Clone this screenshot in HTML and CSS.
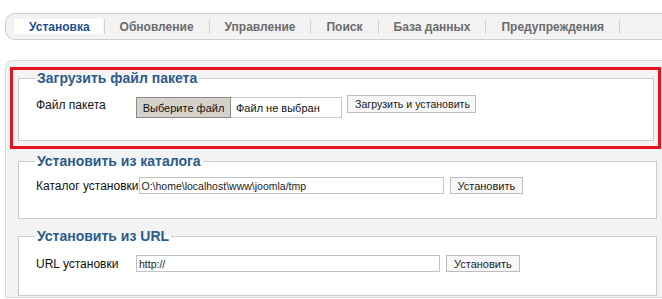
FILE: index.html
```html
<!DOCTYPE html>
<html lang="ru">
<head>
<meta charset="utf-8">
<link rel="stylesheet" href="styles.css">
</head>
<body>
<div class="tabs">
  <div class="tab active"><span>Установка</span></div>
  <div class="tab">Обновление</div>
  <div class="tab">Управление</div>
  <div class="tab">Поиск</div>
  <div class="tab">База данных</div>
  <div class="tab">Предупреждения</div>
</div>
<div class="panel">
  <div class="highlight">
    <fieldset class="box box1">
      <legend>Загрузить файл пакета</legend>
      <div class="row">
        <label class="lbl">Файл пакета</label>
        <div class="file">
          <span class="file-btn">Выберите файл</span>
          <span class="file-name">Файл не выбран</span>
        </div>
        <span class="btn btn-upload">Загрузить и установить</span>
      </div>
    </fieldset>
  </div>
  <fieldset class="box box2">
    <legend>Установить из каталога</legend>
    <div class="row">
      <label class="lbl">Каталог установки</label>
      <span class="input in2">O:\home\localhost\www\joomla/tmp</span>
      <span class="btn">Установить</span>
    </div>
  </fieldset>
  <fieldset class="box box3">
    <legend>Установить из URL</legend>
    <div class="row">
      <label class="lbl">URL установки</label>
      <span class="input in3">http://</span>
      <span class="btn">Установить</span>
    </div>
  </fieldset>
</div>
</body>
</html>
```
FILE: styles.css
```css
html, body {
  margin: 0;
  padding: 0;
  background: #ffffff;
  font-family: "Liberation Sans", Arial, sans-serif;
  overflow: hidden;
}
body {
  width: 662px;
  height: 299px;
}
.tabs {
  margin: 13px -10px 0 5px;
  height: 25px;
  border: 1px solid #cfcfcf;
  border-right: none;
  border-radius: 10px 0 0 10px;
  background: #f3f3f3;
  display: flex;
  align-items: center;
  padding-left: 8px;
}
.tab {
  font-size: 12px;
  font-weight: bold;
  color: #6b6b6b;
  padding: 0 15px;
  border-right: 1px solid #d0d0d0;
  line-height: 14px;
}
.tab.active {
  padding: 0 1px 0 0;
}
.tab.active span {
  display: block;
  background: #ffffff;
  color: #1b4f8e;
  padding: 1px 13px 0 15px;
  line-height: 14px;
}
.panel {
  margin: 20px -4px 0 5px;
  background: #f3f3f3;
  border: 1px solid #d8d8d8;
  border-radius: 8px 0 0 0;
  padding: 6px 4px 10px 4px;
  height: 220px;
}
.highlight {
  border: 3px solid #e3141c;
  padding: 0 4px 5px 5px;
}
.box {
  margin: 0;
  border: 1px solid #cacaca;
  background: #ffffff;
  padding: 9px 17px 22px 17px;
  min-width: 0;
}
.box2, .box3 {
  margin: 4px 4px 0 8px;
}
.box2 {
  padding-top: 8px;
  padding-bottom: 24px;
}
.box3 {
  margin-top: 9px;
  padding-top: 11px;
  padding-bottom: 23px;
}
legend {
  font-size: 14px;
  font-weight: bold;
  color: #2a5b8d;
  line-height: 16px;
  padding: 0 2px;
  margin-left: -1px;
}
.row {
  display: flex;
  align-items: flex-start;
}
.lbl {
  font-size: 12px;
  color: #111;
  min-width: 100px;
  line-height: 16px;
  white-space: nowrap;
}
.box1 .lbl { padding-top: 2px; }
.box2 .lbl, .box3 .lbl { padding-top: 1px; }
.file {
  display: flex;
  width: 206px;
  height: 21px;
  box-sizing: border-box;
  border: 1px solid #c8c8c8;
  background: #fff;
  font-size: 11px;
  margin-top: 2px;
}
.file-btn {
  width: 95px;
  box-sizing: border-box;
  margin: -1px 0 -1px -1px;
  background: #d6d2ca;
  border: 1px solid #8a8a8a;
  color: #111;
  display: flex;
  align-items: center;
  justify-content: center;
}
.file-name {
  padding-left: 5px;
  display: flex;
  align-items: center;
  color: #111;
}
.btn {
  font-size: 11px;
  color: #222;
  background: #f7f7f7;
  border: 1px solid #bdbdbd;
  height: 17px;
  box-sizing: border-box;
  display: flex;
  align-items: center;
  padding: 0 7px;
  margin-left: 6px;
  white-space: nowrap;
}
.btn-upload {
  margin-left: 5px;
  height: 18px;
  width: 129px;
  font-size: 10.6px;
}
.input {
  font-size: 10.5px;
  color: #222;
  background: #fff;
  border: 1px solid #c3c3c3;
  height: 17px;
  box-sizing: border-box;
  display: flex;
  align-items: center;
  padding-left: 2px;
}
.in2 { width: 305px; }
.in3 { width: 304px; }
```
